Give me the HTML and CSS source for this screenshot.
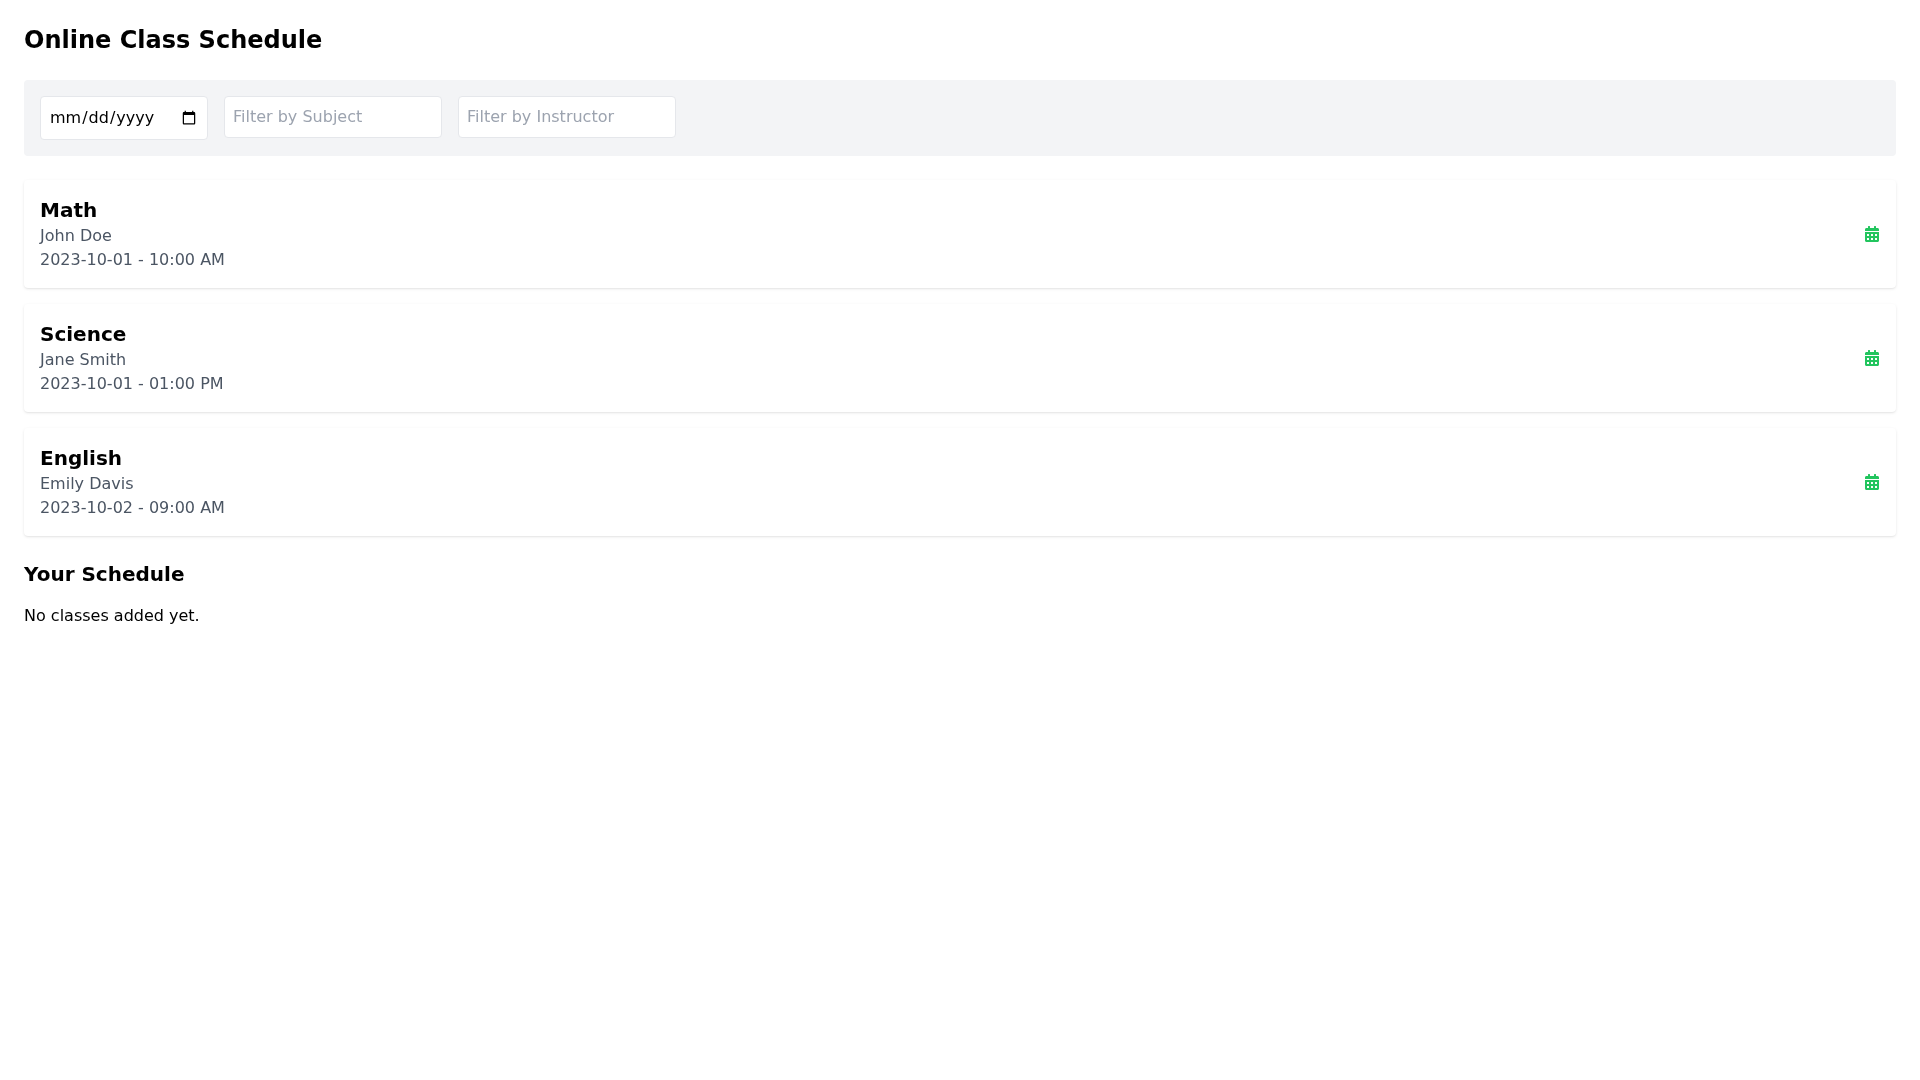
FILE: index.html
```html
<!DOCTYPE html>
<html>
	<head>
		<meta charset="utf-8" />
		<title>Online Class Schedule</title>
		<link rel="stylesheet" href="styles.css">
	</head>

	<body>
		<h1 class="title">Online Class Schedule</h1>
		<div class="filters">
			<input type="date" class="filter filter-date">
			<input type="text" class="filter" placeholder="Filter by Subject">
			<input type="text" class="filter" placeholder="Filter by Instructor">
		</div>

		<div class="classes">
			<div class="class-card">
				<div>
					<h2 class="subject">Math</h2>
					<p class="info">John Doe</p>
					<p class="info">2023-10-01 - 10:00 AM</p>
				</div>
				<svg class="add-icon" viewBox="0 0 448 512"><path d="M0 464c0 26.5 21.5 48 48 48h352c26.500 0 48-21.500 48-48V192H0v272zm320-196c0-6.600 5.400-12 12-12h40c6.600 0 12 5.400 12 12v40c0 6.600-5.400 12-12 12h-40c-6.600 0-12-5.400-12-12v-40zm0 128c0-6.600 5.400-12 12-12h40c6.600 0 12 5.400 12 12v40c0 6.600-5.400 12-12 12h-40c-6.600 0-12-5.400-12-12v-40zM192 268c0-6.600 5.400-12 12-12h40c6.600 0 12 5.400 12 12v40c0 6.600-5.400 12-12 12h-40c-6.600 0-12-5.400-12-12v-40zm0 128c0-6.600 5.400-12 12-12h40c6.600 0 12 5.400 12 12v40c0 6.600-5.400 12-12 12h-40c-6.600 0-12-5.400-12-12v-40zM64 268c0-6.600 5.400-12 12-12h40c6.600 0 12 5.400 12 12v40c0 6.600-5.400 12-12 12H76c-6.600 0-12-5.400-12-12v-40zm0 128c0-6.600 5.400-12 12-12h40c6.600 0 12 5.400 12 12v40c0 6.600-5.400 12-12 12H76c-6.600 0-12-5.400-12-12v-40zM400 64h-48V16c0-8.800-7.200-16-16-16h-32c-8.800 0-16 7.200-16 16v48H160V16c0-8.800-7.200-16-16-16h-32c-8.800 0-16 7.200-16 16v48H48C21.500 64 0 85.500 0 112v48h448v-48c0-26.500-21.500-48-48-48z"/></svg>
			</div>
			<div class="class-card">
				<div>
					<h2 class="subject">Science</h2>
					<p class="info">Jane Smith</p>
					<p class="info">2023-10-01 - 01:00 PM</p>
				</div>
				<svg class="add-icon" viewBox="0 0 448 512"><path d="M0 464c0 26.5 21.5 48 48 48h352c26.500 0 48-21.500 48-48V192H0v272zm320-196c0-6.600 5.400-12 12-12h40c6.600 0 12 5.400 12 12v40c0 6.600-5.400 12-12 12h-40c-6.600 0-12-5.400-12-12v-40zm0 128c0-6.600 5.400-12 12-12h40c6.600 0 12 5.400 12 12v40c0 6.600-5.400 12-12 12h-40c-6.600 0-12-5.400-12-12v-40zM192 268c0-6.600 5.400-12 12-12h40c6.600 0 12 5.400 12 12v40c0 6.600-5.400 12-12 12h-40c-6.600 0-12-5.400-12-12v-40zm0 128c0-6.600 5.400-12 12-12h40c6.600 0 12 5.400 12 12v40c0 6.600-5.400 12-12 12h-40c-6.600 0-12-5.400-12-12v-40zM64 268c0-6.600 5.400-12 12-12h40c6.600 0 12 5.400 12 12v40c0 6.600-5.400 12-12 12H76c-6.600 0-12-5.400-12-12v-40zm0 128c0-6.600 5.400-12 12-12h40c6.600 0 12 5.400 12 12v40c0 6.600-5.400 12-12 12H76c-6.600 0-12-5.400-12-12v-40zM400 64h-48V16c0-8.800-7.200-16-16-16h-32c-8.800 0-16 7.200-16 16v48H160V16c0-8.800-7.200-16-16-16h-32c-8.800 0-16 7.200-16 16v48H48C21.500 64 0 85.500 0 112v48h448v-48c0-26.500-21.500-48-48-48z"/></svg>
			</div>
			<div class="class-card">
				<div>
					<h2 class="subject">English</h2>
					<p class="info">Emily Davis</p>
					<p class="info">2023-10-02 - 09:00 AM</p>
				</div>
				<svg class="add-icon" viewBox="0 0 448 512"><path d="M0 464c0 26.5 21.5 48 48 48h352c26.500 0 48-21.500 48-48V192H0v272zm320-196c0-6.600 5.400-12 12-12h40c6.600 0 12 5.400 12 12v40c0 6.600-5.400 12-12 12h-40c-6.600 0-12-5.400-12-12v-40zm0 128c0-6.600 5.400-12 12-12h40c6.600 0 12 5.400 12 12v40c0 6.600-5.400 12-12 12h-40c-6.600 0-12-5.400-12-12v-40zM192 268c0-6.600 5.400-12 12-12h40c6.600 0 12 5.400 12 12v40c0 6.600-5.400 12-12 12h-40c-6.600 0-12-5.400-12-12v-40zm0 128c0-6.600 5.400-12 12-12h40c6.600 0 12 5.400 12 12v40c0 6.600-5.400 12-12 12h-40c-6.600 0-12-5.400-12-12v-40zM64 268c0-6.600 5.400-12 12-12h40c6.600 0 12 5.400 12 12v40c0 6.600-5.400 12-12 12H76c-6.600 0-12-5.400-12-12v-40zm0 128c0-6.600 5.400-12 12-12h40c6.600 0 12 5.400 12 12v40c0 6.600-5.400 12-12 12H76c-6.600 0-12-5.400-12-12v-40zM400 64h-48V16c0-8.800-7.200-16-16-16h-32c-8.800 0-16 7.200-16 16v48H160V16c0-8.800-7.200-16-16-16h-32c-8.800 0-16 7.200-16 16v48H48C21.500 64 0 85.500 0 112v48h448v-48c0-26.500-21.500-48-48-48z"/></svg>
			</div>
		</div>

		<h2 class="schedule-title">Your Schedule</h2>
		<p class="empty">No classes added yet.</p>
	</body>
</html>
```

FILE: styles.css
```css
* {
	padding: 0px;
	margin: 0px;
	box-sizing: border-box;
}
body {
	padding: 24px;
	font-family: "DejaVu Sans", sans-serif;
	font-size: 16px;
	line-height: 24px;
	color: #000;
	will-change: transform;
}
.title {
	font-size: 24px;
	line-height: 32px;
	font-weight: 700;
	margin-bottom: 24px;
}
.filters {
	display: flex;
	align-items: flex-start;
	gap: 16px;
	padding: 16px;
	margin-bottom: 24px;
	background-color: #f3f4f6;
	border-radius: 4px;
}
.filter {
	padding: 8px;
	font-family: inherit;
	font-size: 16px;
	line-height: 24px;
	background-color: #fff;
	border: 1px solid #e5e7eb;
	border-radius: 4px;
}
.filter-date {
	height: 44px;
}
.filter::placeholder {
	color: #9ca3af;
}
.class-card {
	display: flex;
	justify-content: space-between;
	align-items: center;
	padding: 16px;
	margin-bottom: 16px;
	background-color: #fff;
	border-radius: 4px;
	box-shadow: 0 1px 3px 0 rgba(0, 0, 0, 0.1), 0 1px 2px -1px rgba(0, 0, 0, 0.1);
}
.subject {
	font-size: 20px;
	line-height: 28px;
	font-weight: 700;
}
.info {
	color: #4b5563;
}
.add-icon {
	width: 16px;
	height: 16px;
	fill: #22c55e;
}
.schedule-title {
	margin-top: 24px;
	margin-bottom: 16px;
	font-size: 20px;
	line-height: 28px;
	font-weight: 700;
}
```
